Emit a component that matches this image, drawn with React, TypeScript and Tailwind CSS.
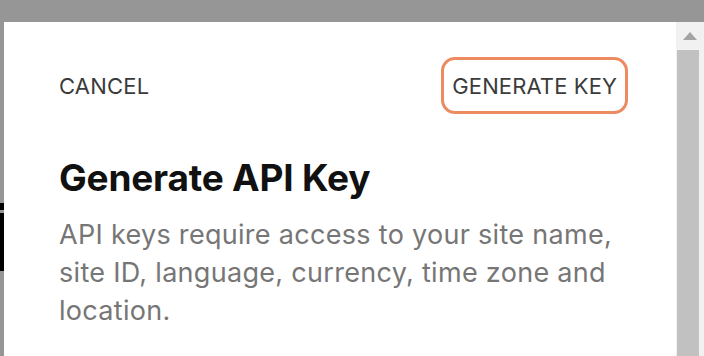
export default function App() {
  return (
    <div
      className="relative w-[704px] h-[356px] overflow-hidden bg-[#969696] pt-[22px] pl-[4px] flex"
      style={{ fontFamily: 'Inter, "Noto Sans", sans-serif' }}
    >
      {/* page content peeking behind the overlay */}
      <div className="absolute left-0 top-[203px] w-[4px] h-[7px] bg-black" />
      <div className="absolute left-0 top-[213px] w-[4px] h-[58px] bg-black" />

      {/* modal */}
      <div className="flex-1 min-w-0 bg-white pl-[55px] pr-[48px] pt-[35px]">
        <div className="flex items-center justify-between">
          <button className="text-[22px] tracking-[0.2px] text-[#3b3b3b] leading-none">CANCEL</button>
          <button className="h-[57px] px-[8px] rounded-[14px] border-[3px] border-[#ec8a60] text-[22px] tracking-[0.1px] text-[#3b3b3b] leading-none">
            GENERATE KEY
          </button>
        </div>

        <h1 className="mt-[42px] text-[37px] font-bold leading-[44px] text-[#111111] tracking-[-0.2px]">
          Generate API Key
        </h1>
        <p className="mt-[16px] text-[27px] leading-[38px] text-[#767676] tracking-[0.3px]">
          API keys require access to your site name, site ID, language, currency, time zone and location.
        </p>
      </div>

      {/* scrollbar */}
      <div className="w-[28px] shrink-0 bg-[#f1f1f1] flex flex-col items-center">
        <div className="h-[28px] w-full flex items-center justify-center">
          <svg width="14" height="8" viewBox="0 0 14 8">
            <path d="M7 0 L14 8 L0 8 Z" fill="#a3a3a3" />
          </svg>
        </div>
        <div className="flex-1 w-[22px] mr-[4px] bg-[#c1c1c1]" />
      </div>
    </div>
  )
}
